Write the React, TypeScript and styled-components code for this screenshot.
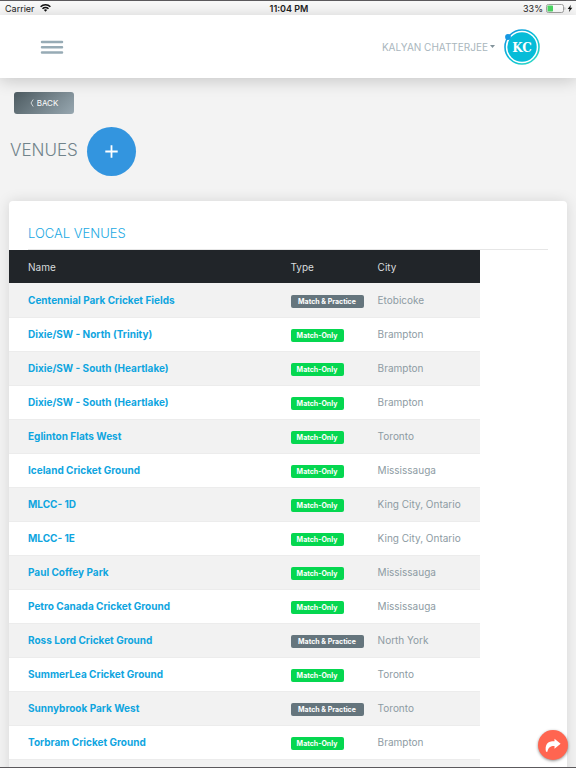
import React from "react";
import styled, { createGlobalStyle } from "styled-components";

const GlobalStyle = createGlobalStyle`
  * { box-sizing: border-box; }
  body { margin: 0; background: #f3f3f3; }
  button { font: inherit; border: 0; padding: 0; cursor: pointer; }
`;

const Screen = styled.div`
  display: flex;
  flex-direction: column;
  height: 100vh;
  overflow: hidden;
  border-top: 1px solid #5c5a5d;
  border-bottom: 1px solid #5c5a5d;
  background: #f3f3f3;
  font-family: Inter, "Open Sans", sans-serif;
  font-size: 10px;
  color: #8d9ba3;
`;

const StatusBar = styled.div`
  display: grid;
  grid-template-columns: 1fr auto 1fr;
  align-items: center;
  flex: none;
  height: 14px;
  padding: 0 3px 0 5px;
  background: #f9f9f9;
  font-family: Inter, sans-serif;
  font-size: 9px;
  color: #222;
`;

const StatusGroup = styled.div<{ $end?: boolean }>`
  display: flex;
  align-items: center;
  justify-content: ${(p) => (p.$end ? "flex-end" : "flex-start")};
  gap: ${(p) => (p.$end ? 3 : 5)}px;
`;

const Clock = styled.strong`
  font-weight: 600;
`;

const Header = styled.header`
  display: flex;
  align-items: center;
  justify-content: space-between;
  flex: none;
  height: 63px;
  padding: 0 36px 0 40px;
  background: #fff;
  box-shadow: 0 2px 16px rgba(0, 0, 0, 0.2);
  z-index: 1;
`;

const MenuButton = styled.button`
  display: flex;
  background: none;
  color: #97abb5;
`;

const Account = styled.div`
  display: flex;
  align-items: center;
  gap: 9px;
`;

const AccountButton = styled.button`
  display: flex;
  align-items: center;
  gap: 2px;
  background: none;
  color: #a9b6bd;
  font-size: 10px;
`;

const Main = styled.main`
  display: flex;
  flex-direction: column;
  align-items: flex-start;
  flex: 1;
  min-height: 0;
  overflow: hidden;
  padding: 14px 9px 0;
`;

const BackButton = styled.button`
  display: flex;
  align-items: center;
  justify-content: center;
  gap: 3px;
  flex: none;
  width: 60px;
  height: 22px;
  margin-left: 5px;
  border-radius: 3px;
  background: linear-gradient(135deg, #4d5b61, #97a7b0);
  color: #fff;
  font-size: 8px;
`;

const TitleRow = styled.div`
  display: flex;
  align-items: center;
  flex: none;
  gap: 9px;
  margin: 13px 0 25px 1px;
`;

const Title = styled.h1`
  margin: 0;
  padding-bottom: 3px;
  font-size: 17px;
  font-weight: 300;
  color: #71838b;
`;

const AddButton = styled.button`
  display: flex;
  align-items: center;
  justify-content: center;
  width: 49px;
  height: 49px;
  border-radius: 50%;
  background: #3395df;
  color: #fff;
`;

const Card = styled.section`
  flex: none;
  align-self: stretch;
  border-radius: 4px 4px 0 0;
  background: #fff;
  box-shadow: 0 0 14px rgba(0, 0, 0, 0.12);
`;

const CardTitle = styled.h2`
  margin: 0 19px;
  height: 49px;
  padding-top: 24px;
  border-bottom: 1px solid #e6e6e6;
  font-size: 13px;
  line-height: 16px;
  font-weight: 300;
  color: #1ba9e3;
`;

const VenueTable = styled.table`
  width: 84.4%;
  border-collapse: collapse;
  table-layout: fixed;
  text-align: left;
`;

const HeadCell = styled.th<{ $width: string }>`
  width: ${(p) => p.$width};
  height: 33px;
  padding: 0 0 0 6px;
  background: #212529;
  color: #d8dcde;
  font-size: 10px;
  font-weight: 400;
  &:first-child { padding-left: 19px; }
`;

const Row = styled.tr`
  height: 34px;
  &:nth-child(odd) { background: #f2f2f2; }
`;

const Cell = styled.td`
  padding: 0 0 0 6px;
  border-bottom: 1px solid #ececec;
  white-space: nowrap;
  &:first-child { padding-left: 19px; }
`;

const VenueLink = styled.a`
  color: #0fa5df;
  font-weight: 700;
  text-decoration: none;
`;

const Badge = styled.span<{ $practice: boolean }>`
  display: flex;
  align-items: center;
  justify-content: center;
  width: ${(p) => (p.$practice ? 73 : 53)}px;
  height: 13px;
  margin-top: 3px;
  border-radius: 2px;
  background: ${(p) => (p.$practice ? "#65757d" : "#05d750")};
  color: #fff;
  font-size: 7px;
  font-weight: 700;
`;

const ShareButton = styled.button`
  position: fixed;
  right: 8px;
  bottom: 8px;
  z-index: 2;
  display: flex;
  align-items: center;
  justify-content: center;
  width: 30px;
  height: 30px;
  border-radius: 50%;
  background: #ff6550;
  color: #fff;
  box-shadow: 0 1px 3px rgba(0, 0, 0, 0.45);
`;

const venues: { name: string; practice?: boolean; city: string }[] = [
  { name: "Centennial Park Cricket Fields", practice: true, city: "Etobicoke" },
  { name: "Dixie/SW - North (Trinity)", city: "Brampton" },
  { name: "Dixie/SW - South (Heartlake)", city: "Brampton" },
  { name: "Dixie/SW - South (Heartlake)", city: "Brampton" },
  { name: "Eglinton Flats West", city: "Toronto" },
  { name: "Iceland Cricket Ground", city: "Mississauga" },
  { name: "MLCC- 1D", city: "King City, Ontario" },
  { name: "MLCC- 1E", city: "King City, Ontario" },
  { name: "Paul Coffey Park", city: "Mississauga" },
  { name: "Petro Canada Cricket Ground", city: "Mississauga" },
  { name: "Ross Lord Cricket Ground", practice: true, city: "North York" },
  { name: "SummerLea Cricket Ground", city: "Toronto" },
  { name: "Sunnybrook Park West", practice: true, city: "Toronto" },
  { name: "Torbram Cricket Ground", city: "Brampton" },
];

const WifiIcon = () => (
  <svg width="11" height="8" viewBox="0 0 11 8" aria-hidden="true">
    <g fill="none" stroke="#111" strokeWidth="1.5">
      <path d="M.6 2.8a7 7 0 0 1 9.8 0" />
      <path d="M2.5 4.8a4.3 4.3 0 0 1 6 0" />
    </g>
    <path d="M3.9 6.1a2.3 2.3 0 0 1 3.2 0L5.5 7.8z" fill="#111" />
  </svg>
);

const BatteryIcon = () => (
  <svg width="27" height="9" viewBox="0 0 27 9" aria-hidden="true">
    <rect x=".5" y=".5" width="17" height="8" rx="1.8" fill="#fff" stroke="#a3a3a3" />
    <rect x="1.5" y="1.5" width="5.5" height="6" rx=".7" fill="#4cd964" />
    <path d="M18.6 3v3c1-.3 1-2.7 0-3z" fill="#a3a3a3" />
    <path d="M25 .8l-3.300 4.200h1.900l-.8 3.200 3.500-4.400h-2z" fill="#111" />
  </svg>
);

const MenuIcon = () => (
  <svg width="24" height="14" viewBox="0 0 24 14" aria-hidden="true">
    <path d="M2 2h20M2 7.300h20M2 12.600h20" stroke="currentColor" strokeWidth="2.500" strokeLinecap="round" />
  </svg>
);

const Avatar = () => (
  <svg width="36" height="36" viewBox="0 0 36 36" role="img" aria-label="KC">
    <defs>
      <linearGradient id="ring" x1="0" y1="0" x2="1" y2="1">
        <stop offset="0" stopColor="#168fe0" />
        <stop offset=".5" stopColor="#08bfd8" />
        <stop offset="1" stopColor="#35dcc0" />
      </linearGradient>
    </defs>
    <circle cx="18" cy="18" r="17" fill="#fff" stroke="url(#ring)" strokeWidth="1.6" />
    <circle cx="18" cy="18" r="14.700" fill="#06bcd8" />
    <circle cx="4" cy="8" r="2.900" fill="#1597e2" />
    <text x="18" y="22.500" textAnchor="middle" fill="#fff" fontFamily="'DejaVu Serif', serif" fontSize="12" fontWeight="700">KC</text>
  </svg>
);

const CaretIcon = () => (
  <svg width="5" height="3" viewBox="0 0 5 3" aria-hidden="true">
    <path d="M0 0h5L2.5 3z" fill="#82939b" />
  </svg>
);

const ChevronIcon = () => (
  <svg width="4" height="8" viewBox="0 0 4 8" aria-hidden="true">
    <path d="M3.200.5L1 4l2.200 3.500" fill="none" stroke="currentColor" strokeWidth=".7" />
  </svg>
);

const PlusIcon = () => (
  <svg width="13" height="13" viewBox="0 0 13 13" aria-hidden="true">
    <path d="M6.500.3v12.400M.3 6.500h12.400" stroke="currentColor" strokeWidth="1.800" />
  </svg>
);

const ShareIcon = () => (
  <svg width="16" height="15" viewBox="0 0 16 15" aria-hidden="true">
    <path d="M9.500.8L15.600 5.800l-6.100 5V8C6 7.800 3.300 9 2.400 13.800H1C.3 10.500.6 7.800 2 5.800 3.500 3.900 6 3.300 9.500 3.300z" fill="currentColor" />
  </svg>
);

export default function App() {
  return (
    <Screen>
      <GlobalStyle />
      <StatusBar>
        <StatusGroup>
          <span>Carrier</span>
          <WifiIcon />
        </StatusGroup>
        <Clock>11:04 PM</Clock>
        <StatusGroup $end>
          <span>33%</span>
          <BatteryIcon />
        </StatusGroup>
      </StatusBar>
      <Header>
        <MenuButton type="button" aria-label="Menu">
          <MenuIcon />
        </MenuButton>
        <Account>
          <AccountButton type="button">
            KALYAN CHATTERJEE
            <CaretIcon />
          </AccountButton>
          <Avatar />
        </Account>
      </Header>
      <Main>
        <BackButton type="button">
          <ChevronIcon />
          BACK
        </BackButton>
        <TitleRow>
          <Title>VENUES</Title>
          <AddButton type="button" aria-label="Add venue">
            <PlusIcon />
          </AddButton>
        </TitleRow>
        <Card>
          <CardTitle>LOCAL VENUES</CardTitle>
          <VenueTable>
            <thead>
              <tr>
                <HeadCell $width="58.5%">Name</HeadCell>
                <HeadCell $width="18.5%">Type</HeadCell>
                <HeadCell $width="23%">City</HeadCell>
              </tr>
            </thead>
            <tbody>
              {venues.map((venue, index) => (
                <Row key={index}>
                  <Cell>
                    <VenueLink href="#venue">{venue.name}</VenueLink>
                  </Cell>
                  <Cell>
                    <Badge $practice={!!venue.practice}>
                      {venue.practice ? "Match & Practice" : "Match-Only"}
                    </Badge>
                  </Cell>
                  <Cell>{venue.city}</Cell>
                </Row>
              ))}
              <Row>
                <Cell colSpan={3} />
              </Row>
            </tbody>
          </VenueTable>
        </Card>
      </Main>
      <ShareButton type="button" aria-label="Share">
        <ShareIcon />
      </ShareButton>
    </Screen>
  );
}
